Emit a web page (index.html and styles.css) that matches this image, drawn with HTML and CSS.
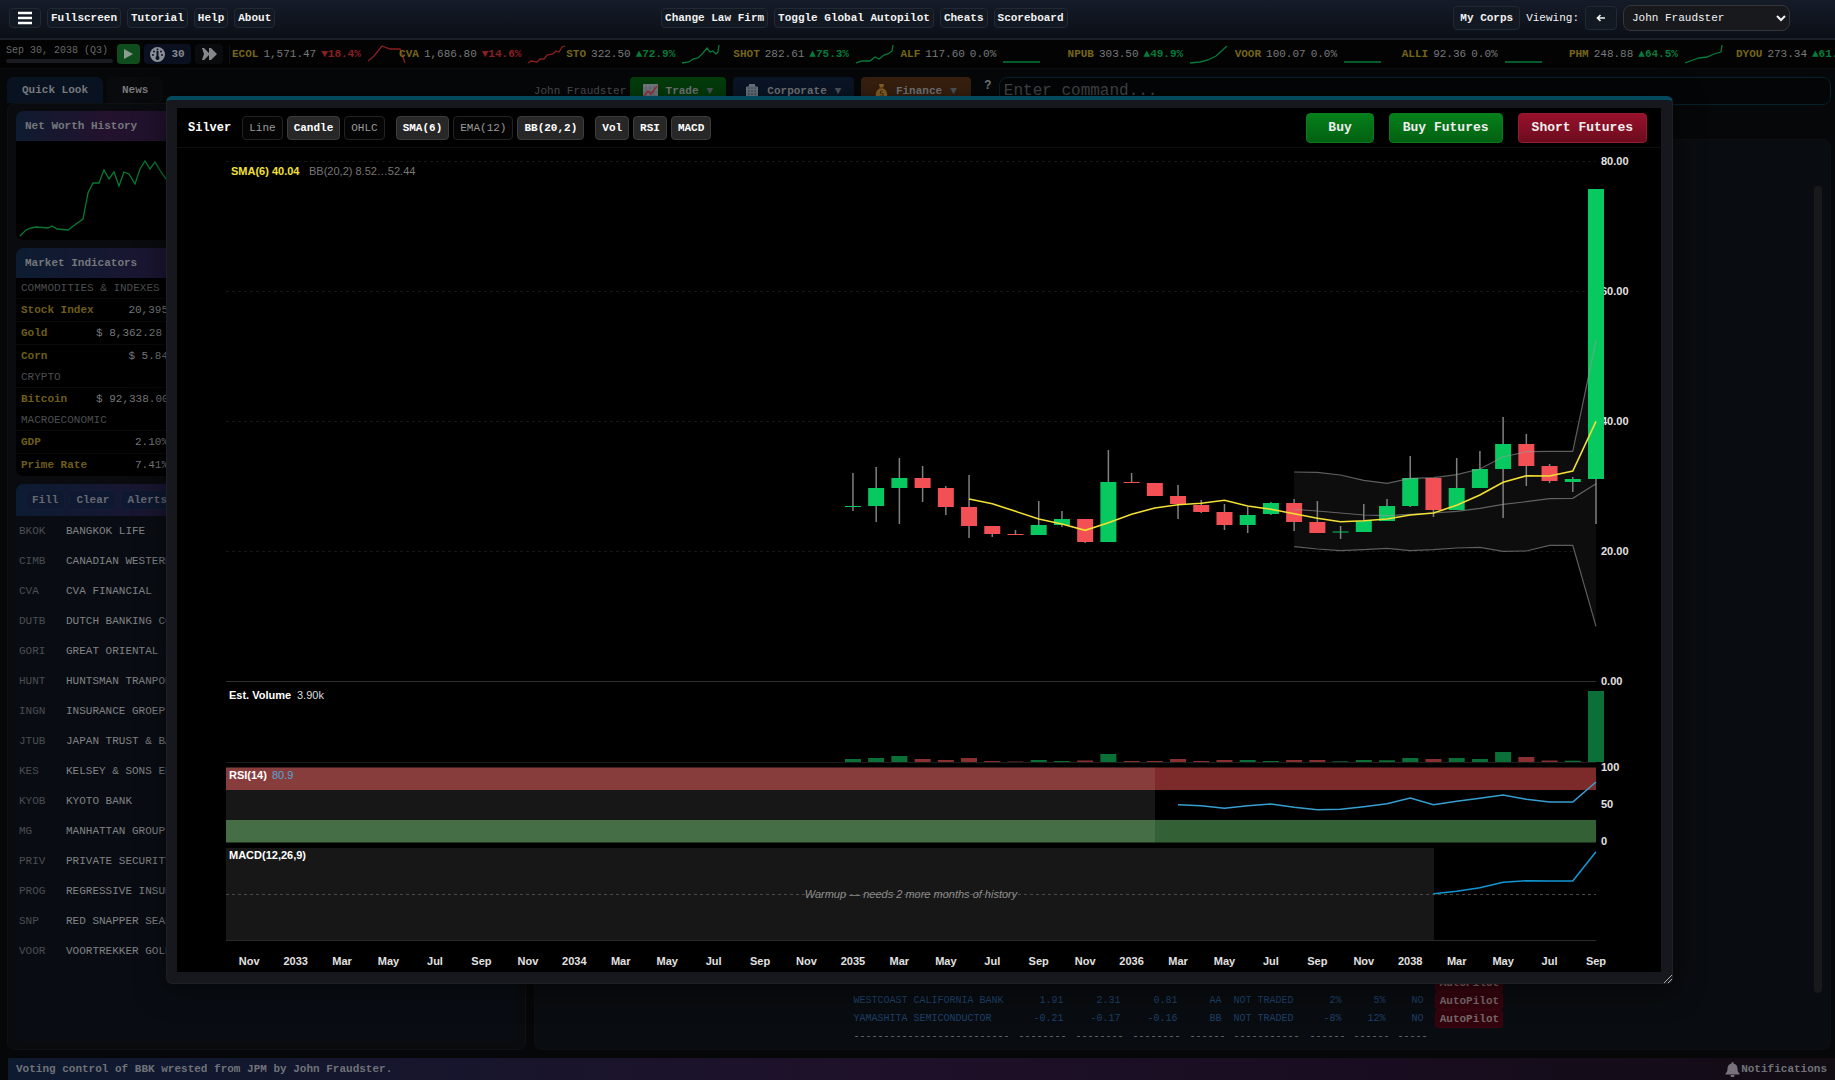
FILE: index.html
```html
<!DOCTYPE html>
<html lang="en">
<head>
  <meta charset="utf-8">
  <meta name="viewport" content="width=device-width, initial-scale=1.0">
  <title>Silver - Price Chart</title>
  <link rel="stylesheet" href="styles.css">
</head>
<body>
  <!-- Top menu -->
  <header class="topbar">
    <div class="group">
      <button class="btn menu-btn" aria-label="Menu">
        <svg width="14" height="14" viewBox="0 0 14 14"><path d="M0 2h14M0 7h14M0 12h14" stroke="#fff" stroke-width="2.4"/></svg>
      </button>
      <button class="btn">Fullscreen</button>
      <button class="btn">Tutorial</button>
      <button class="btn">Help</button>
      <button class="btn">About</button>
    </div>
    <div class="group">
      <button class="btn">Change Law Firm</button>
      <button class="btn">Toggle Global Autopilot</button>
      <button class="btn">Cheats</button>
      <button class="btn">Scoreboard</button>
    </div>
    <div class="group">
      <button class="btn tall">My Corps</button>
      <label for="viewing">Viewing:</label>
      <button class="btn tall back" aria-label="Back">
        <svg width="10" height="8" viewBox="0 0 10 8"><path d="M9 4H2M4.500 1L1.500 4l3 3" fill="none" stroke="#f2f2f2" stroke-width="1.700"/></svg>
      </button>
      <select id="viewing" class="viewing"><option>John Fraudster</option></select>
    </div>
  </header>

  <!-- Date, speed controls and stock ticker -->
  <div class="tickerbar">
    <div class="date">
      <span>Sep 30, 2038 (Q3)</span>
      <div class="progress"></div>
    </div>
    <button class="ctl play" aria-label="Play">
      <svg width="10" height="12" viewBox="0 0 10 12"><path d="M0 1l9 5-9 5z" fill="#8e9b90"/></svg>
    </button>
    <button class="ctl speed">
      <svg width="15" height="15" viewBox="0 0 15 15"><circle cx="7.500" cy="7.500" r="7.500" fill="#8a8e96"/><path d="M7.500 4v7" stroke="#0b1220" stroke-width="2"/><circle cx="7.500" cy="11" r="2" fill="#0b1220"/><g fill="#0b1220"><circle cx="3" cy="8" r="1"/><circle cx="4" cy="4.500" r="1"/><circle cx="11" cy="4.500" r="1"/><circle cx="12" cy="8" r="1"/><circle cx="7.500" cy="2.500" r="1"/></g></svg>
      30
    </button>
    <button class="ctl ff" aria-label="Fast forward">
      <svg width="16" height="14" viewBox="0 0 16 14"><path d="M1 1h2l5 5V1h2l6 6-6 6H8V8l-5 5H1l2-6z" fill="#85878a"/></svg>
    </button>
    <div class="ticker" id="ticker"></div>
  </div>

  <main class="main">
    <aside class="side">
      <nav class="tabs">
        <button class="tab active">Quick Look</button>
        <button class="tab">News</button>
      </nav>
      <div class="side-panel">
        <section class="card">
          <h2>Net Worth History</h2>
          <svg class="worth" height="99">
            <polyline points="4,95 10,89 15,87 20,86 32,87 36,85 41,88 52,89 60,83 67,78 72,52 77,42 83,42 88,29 93,38 98,31 103,45 108,31 113,33 119,43 124,28 129,20 134,28 139,21 145,31 150,38" fill="none" stroke="#067a33" stroke-width="1.300"/>
          </svg>
        </section>
        <section class="card">
          <h2>Market Indicators</h2>
          <table class="indicators">
            <colgroup><col class="i-name"><col class="i-value"><col></colgroup>
            <tr class="head"><th colspan="3">COMMODITIES &amp; INDEXES</th></tr>
            <tr><td>Stock Index</td><td>20,395</td><td></td></tr>
            <tr><td>Gold</td><td>$ 8,362.28&nbsp;</td><td></td></tr>
            <tr><td>Corn</td><td>$ 5.84</td><td></td></tr>
            <tr class="head"><th colspan="3">CRYPTO</th></tr>
            <tr><td>Bitcoin</td><td>$ 92,338.00</td><td></td></tr>
            <tr class="head"><th colspan="3">MACROECONOMIC</th></tr>
            <tr><td>GDP</td><td>2.10%</td><td></td></tr>
            <tr><td>Prime Rate</td><td>7.41%</td><td></td></tr>
          </table>
        </section>
        <section class="card watch">
          <div class="watch-head">
            <button>Fill</button>
            <button>Clear</button>
            <button>Alerts</button>
          </div>
          <ul>
            <li><span>BKOK</span>BANGKOK LIFE</li>
            <li><span>CIMB</span>CANADIAN WESTERN</li>
            <li><span>CVA</span>CVA FINANCIAL</li>
            <li><span>DUTB</span>DUTCH BANKING CO</li>
            <li><span>GORI</span>GREAT ORIENTAL L</li>
            <li><span>HUNT</span>HUNTSMAN TRANPOR</li>
            <li><span>INGN</span>INSURANCE GROEP,</li>
            <li><span>JTUB</span>JAPAN TRUST &amp; BA</li>
            <li><span>KES</span>KELSEY &amp; SONS EN</li>
            <li><span>KYOB</span>KYOTO BANK</li>
            <li><span>MG</span>MANHATTAN GROUP</li>
            <li><span>PRIV</span>PRIVATE SECURITY</li>
            <li><span>PROG</span>REGRESSIVE INSUR</li>
            <li><span>SNP</span>RED SNAPPER SEAF</li>
            <li><span>VOOR</span>VOORTREKKER GOLD</li>
          </ul>
        </section>
      </div>
    </aside>

    <section class="work">
      <div class="command">
        <span class="player">John Fraudster</span>
        <button class="cmd trade">
          <svg width="15" height="15" viewBox="0 0 15 15"><rect width="15" height="15" rx="1" fill="#7c8088"/><path d="M3 0v15M7 0v15M11 0v15M0 4h15M0 8h15M0 12h15" stroke="#62676f" stroke-width=".6"/><path d="M1 12l4-5 3 3 6-8" fill="none" stroke="#a0303a" stroke-width="1.500"/></svg>
          Trade <i>▼</i>
        </button>
        <button class="cmd corporate">
          <svg width="14" height="15" viewBox="0 0 14 15"><path d="M1 3l3-1V0h6v2l3 1v12H1z" fill="#6d7681"/><path d="M4 3v10M7 3v10M10 3v10" stroke="#37465a" stroke-dasharray="2 1"/></svg>
          Corporate <i>▼</i>
        </button>
        <button class="cmd finance">
          <svg width="13" height="15" viewBox="0 0 13 15"><path d="M4 0h5L8 4c3 2 5 5 4 8-1 3-10 3-11 0-1-3 1-6 4-8z" fill="#8a6428"/><path d="M4 4h5M8 7H5.500v2.500H8V12H5" fill="none" stroke="#4a3010"/></svg>
          Finance <i>▼</i>
        </button>
        <span class="help">?</span>
        <input class="prompt" type="text" placeholder="Enter command..." aria-label="Command">
      </div>
      <div class="board">
        <div class="scrollbar"></div>
        <table class="corps">
          <colgroup>
            <col class="c-name"><col class="c-num"><col class="c-num"><col class="c-num"><col class="c-rate"><col class="c-trade"><col class="c-pct"><col class="c-pct"><col class="c-no"><col class="c-pilot">
          </colgroup>
          <tr><td></td><td></td><td></td><td></td><td></td><td></td><td></td><td></td><td></td><td><button>AutoPilot</button></td></tr>
          <tr><td>WESTCOAST CALIFORNIA BANK</td><td>1.91</td><td>2.31</td><td>0.81</td><td>AA</td><td>NOT TRADED</td><td>2%</td><td>5%</td><td>NO</td><td><button>AutoPilot</button></td></tr>
          <tr><td>YAMASHITA SEMICONDUCTOR</td><td>-0.21</td><td>-0.17</td><td>-0.16</td><td>BB</td><td>NOT TRADED</td><td>-8%</td><td>12%</td><td>NO</td><td><button>AutoPilot</button></td></tr>
          <tr class="rule"><td>--------------------------</td><td>--------</td><td>--------</td><td>--------</td><td>------</td><td>-----------</td><td>------</td><td>------</td><td>-----</td><td></td></tr>
        </table>
      </div>
    </section>
  </main>

  <footer class="status">
    <span>Voting control of BBK wrested from JPM by John Fraudster.</span>
    <span class="notes">
      <svg width="15" height="15" viewBox="0 0 15 15"><path d="M7.500 0c1 0 1 1 1 1.500 3 .5 4 3 4 5 0 3 1 4 2 5v1H.5v-1c1-1 2-2 2-5 0-2 1-4.500 4-5 0-.5 0-1.500 1-1.500zM5.500 13h4c0 3-4 3-4 0z" fill="#77727c"/></svg>
      Notifications
    </span>
  </footer>

  <!-- Chart window -->
  <div class="overlay">
    <div class="modal">
      <div class="modal-inner">
        <div class="toolbar">
          <h1>Silver</h1>
          <div class="toggles">
            <button>Line</button>
            <button class="on">Candle</button>
            <button>OHLC</button>
          </div>
          <div class="toggles">
            <button class="on">SMA(6)</button>
            <button>EMA(12)</button>
            <button class="on">BB(20,2)</button>
          </div>
          <div class="toggles">
            <button class="on">Vol</button>
            <button class="on">RSI</button>
            <button class="on">MACD</button>
          </div>
          <div class="actions">
            <button class="buy wide">Buy</button>
            <button class="buy">Buy Futures</button>
            <button class="short">Short Futures</button>
          </div>
        </div>
        <svg class="chart" id="chart" viewBox="177 148 1484 824" preserveAspectRatio="xMidYMid meet"></svg>
      </div>
      <svg class="grip" width="8" height="8" viewBox="0 0 8 8"><path d="M0 8l8-8M4 8l4-4" stroke="#aaa"/></svg>
    </div>
  </div>

  <script src="script.js"></script>
</body>
</html>
```
FILE: styles.css
```css
* {
  box-sizing: border-box;
}

body {
  margin: 0;
  height: 100vh;
  display: flex;
  flex-direction: column;
  overflow: hidden;
  background: #060708;
  color: #77797c;
  font: 11px/14px "Liberation Mono", "DejaVu Sans Mono", monospace;
}

button,
select,
input {
  font: inherit;
  color: inherit;
  margin: 0;
}

button {
  font-weight: bold;
  white-space: nowrap;
}

h1,
h2,
ul {
  margin: 0;
  padding: 0;
}

/* Top menu */
.topbar {
  flex: 0 0 40px;
  display: flex;
  align-items: center;
  justify-content: space-between;
  padding: 0 45px 2px 9px;
  background: linear-gradient(#151b28, #0b0f17);
  border-bottom: 2px solid #1c2026;
  color: #f2f2f2;
}

.group {
  display: flex;
  align-items: center;
  gap: 6px;
}

.btn {
  display: flex;
  align-items: center;
  justify-content: center;
  height: 20px;
  padding: 0 3px;
  background: #131922;
  border: 1px solid #222934;
  border-radius: 4px;
}

.menu-btn {
  width: 32px;
}

.tall {
  height: 24px;
  padding: 0 6px;
}

.back {
  width: 32px;
}

.viewing {
  width: 167px;
  height: 26px;
  padding: 0 4px;
  background: #17191d;
  border: 1px solid #33363b;
  border-radius: 8px;
}

/* Ticker */
.tickerbar {
  flex: 0 0 29px;
  display: flex;
  align-items: center;
  gap: 4px;
  padding-left: 6px;
  background: #030303;
  border-bottom: 1px solid #0c0d0e;
  overflow: hidden;
}

.date {
  width: 107px;
  margin-bottom: 2px;
  white-space: nowrap;
  color: #66686a;
  font-size: 10px;
}

.progress {
  height: 4px;
  margin-top: 1px;
  border-radius: 2px;
  background: #1a1c22;
}

.ctl {
  display: flex;
  align-items: center;
  justify-content: center;
  gap: 6px;
  height: 20px;
  padding: 0;
  border: 0;
  border-radius: 4px;
  color: #85888d;
}

.play {
  width: 23px;
  background: #104d1e;
}

.speed {
  width: 47px;
  background: #0a1020;
}

.ff {
  width: 28px;
  background: #0a0b0c;
}

.ticker {
  flex: 1;
  display: flex;
  margin-left: 2px;
  padding-left: 2px;
  border-left: 1px solid #111214;
  overflow: hidden;
}

.quote {
  flex: 0 0 auto;
  display: flex;
  align-items: center;
  gap: 5px;
  width: calc(100% / 9 - 11px);
  min-width: 167px;
  white-space: nowrap;
}

.quote svg {
  flex: none;
  margin-left: 2px;
}

.quote b {
  color: #75651a;
}

.quote .up {
  color: #067a3a;
  font-weight: bold;
}

.quote .down {
  color: #8a1f22;
  font-weight: bold;
}

/* Page columns */
.main {
  flex: 1;
  min-height: 0;
  display: grid;
  grid-template-columns: 2fr 5fr;
  gap: 8px;
  padding: 8px 4px 8px 7px;
}

.side,
.work {
  display: flex;
  flex-direction: column;
  min-width: 0;
  min-height: 0;
}

.tabs {
  display: flex;
  gap: 4px;
}

.tab {
  height: 26px;
  padding: 0 15px;
  border: 0;
  border-radius: 6px 6px 0 0;
  background: #090a0c;
}

.tab.active {
  background: #091220;
}

.side-panel {
  flex: 1;
  display: flex;
  flex-direction: column;
  gap: 8px;
  padding: 7px 8px;
  border: 1px solid #0f1114;
  border-radius: 8px;
  background: #090b0e;
}

.card {
  border-radius: 7px;
  overflow: hidden;
  background: #000;
}

.card h2 {
  height: 30px;
  padding-left: 9px;
  background: linear-gradient(90deg, #0e1b30, #24122f 90px, #0e1424 400px);
  font-size: 11px;
  line-height: 30px;
  color: #74777c;
}

.card:nth-child(2) h2 {
  background: linear-gradient(90deg, #0d1c31, #1c1532 150px, #0e1424 400px);
}

.worth {
  display: block;
  width: 100%;
}

.indicators {
  width: 100%;
  table-layout: fixed;
  border-collapse: collapse;
}

.i-name { width: 80px; }
.i-value { width: 72px; }

.indicators td,
.indicators th {
  height: 23px;
  padding: 0;
  border-top: 1px solid #0a0a0b;
  color: #6e5d18;
  font-weight: bold;
  text-align: left;
}

.indicators .head th {
  height: 20px;
  padding-left: 5px;
  border: 0;
  color: #4c4e50;
  font-weight: normal;
}

.indicators td:first-child {
  padding-left: 5px;
  white-space: nowrap;
}

.indicators td:nth-child(2) {
  text-align: right;
  font-weight: normal;
  white-space: nowrap;
  color: #77797b;
}

.watch {
  flex: 1;
  background: #090d13;
}

.watch-head {
  display: flex;
  align-items: center;
  gap: 4px;
  height: 32px;
  padding-left: 9px;
  background: linear-gradient(90deg, #0c1c32, #1b1532 150px, #0e1424 400px);
}

.watch-head button {
  height: 20px;
  padding: 0 6px;
  border: 1px solid #161c30;
  border-radius: 4px;
  background: #0e1830;
  color: #666a70;
}

.watch ul {
  list-style: none;
}

.watch li {
  display: flex;
  height: 30px;
  padding-left: 3px;
  line-height: 30px;
  white-space: nowrap;
  color: #808284;
}

.watch li span {
  width: 47px;
  color: #4b4e51;
}

/* Command row */
.command {
  display: flex;
  align-items: center;
  height: 28px;
  gap: 7px;
}

.player {
  width: 89px;
  color: #4f5255;
  white-space: nowrap;
}

.cmd {
  display: flex;
  align-items: center;
  justify-content: center;
  gap: 8px;
  height: 28px;
  padding: 0;
  border: 0;
  border-radius: 4px;
}

.cmd i {
  font-style: normal;
  color: #4f5860;
}

.trade {
  width: 96px;
  background: #033d0b;
}

.corporate {
  width: 121px;
  background: #0a1526;
}

.finance {
  width: 110px;
  background: #38200f;
}

.help {
  width: 20px;
  align-self: flex-start;
  line-height: 18px;
  text-align: center;
  font-weight: bold;
  font-size: 12px;
}

.prompt {
  flex: 1;
  min-width: 0;
  height: 28px;
  margin-left: -6px;
  padding: 0 4px;
  border: 1px solid #06202c;
  border-radius: 8px;
  background: #030506;
  font-size: 16px;
}

.prompt::placeholder {
  color: #44474a;
}

.board {
  flex: 1;
  position: relative;
  display: flex;
  align-items: flex-end;
  justify-content: center;
  margin-top: 34px;
  padding: 0 8px 3px 0;
  border: 1px solid #0d0f12;
  border-radius: 8px;
  background: #090c10;
}

/* Thumb over the right edge of the board */
.scrollbar {
  position: absolute;
  top: 46px;
  right: 8px;
  bottom: 56px;
  width: 8px;
  border-radius: 4px;
  background: #17191b;
}

.corps {
  width: 650px;
  table-layout: fixed;
  border-collapse: collapse;
  font-size: 10px;
  color: #1d4068;
}

.c-name { width: 165px; }
.c-num { width: 57px; }
.c-rate { width: 44px; }
.c-trade { width: 76px; }
.c-pct { width: 44px; }
.c-no { width: 38px; }
.c-pilot { width: 68px; }

.corps td {
  height: 18px;
  padding: 0 12px 0 0;
  line-height: 16px;
  text-align: right;
  white-space: nowrap;
}

.corps td:first-child,
.corps td:nth-child(6),
.corps .rule td {
  padding: 0;
  text-align: left;
}

.corps td:last-child {
  padding: 0;
}

.corps .rule td {
  color: #6a6d70;
}

.corps button {
  display: block;
  width: 68px;
  height: 18px;
  padding: 0;
  border: 1px solid #3c0510;
  border-radius: 3px;
  background: #33040d;
  color: #76686b;
  font-size: 11px;
}

/* Status bar */
.status {
  flex: 0 0 22px;
  display: flex;
  align-items: center;
  justify-content: space-between;
  margin-left: 8px;
  padding: 0 8px;
  background: linear-gradient(90deg, #0e1a30, #1e112a 45%, #180d20 75%, #120c14);
  color: #6f7378;
  font-weight: bold;
}

.notes {
  display: flex;
  align-items: center;
  gap: 1px;
}

/* Chart window */
.overlay {
  position: fixed;
  inset: 0;
  display: flex;
  padding: 96px 162px;
  padding-left: 166px;
  pointer-events: none;
}

.modal {
  flex: 1;
  position: relative;
  display: flex;
  padding: 8px 11px 11px 10px;
  background: #16181d;
  border: 1px solid #1d2127;
  border-top: 4px solid #04495e;
  border-radius: 6px;
  box-shadow: 0 4px 30px rgba(0, 0, 0, 0.5);
  pointer-events: auto;
}

.modal-inner {
  flex: 1;
  min-width: 0;
  display: flex;
  flex-direction: column;
  background: #000;
}

.toolbar {
  flex: 0 0 40px;
  display: flex;
  align-items: center;
  gap: 11px;
  padding: 0 14px 0 11px;
  border-bottom: 1px solid #0e0e0f;
}

.toolbar h1 {
  font-size: 12px;
  color: #fff;
}

.toggles {
  display: flex;
  gap: 4px;
}

.toggles button {
  height: 24px;
  padding: 0 6px;
  border: 1px solid #222;
  border-radius: 4px;
  background: #050505;
  color: #999;
  font-weight: normal;
}

.toggles .on {
  background: #272727;
  border-color: #3c3c3c;
  color: #fff;
  font-weight: bold;
}

.actions {
  display: flex;
  gap: 15px;
  margin-left: auto;
}

.actions button {
  height: 30px;
  padding: 0 13px;
  border: 1px solid #0b7a1c;
  border-radius: 4px;
  color: #eee;
  font-size: 13px;
}

.actions .wide {
  padding: 0 21px;
}

.actions .buy {
  background: linear-gradient(#05801a, #036012);
}

.actions .short {
  border-color: #951c33;
  background: linear-gradient(#98102b, #6c0c1e);
}

.chart {
  flex: 1;
  min-height: 0;
  width: 100%;
  font: 11px "Liberation Sans", Arial, sans-serif;
}

.axis {
  fill: #e2e2e2;
  font-weight: bold;
}

.title {
  fill: #fff;
  font-weight: bold;
}

.warmup {
  fill: #8c8c8c;
  font-style: italic;
}

/* Resize handle */
.grip {
  position: absolute;
  right: 0;
  bottom: 0;
}
```
FILE: script.js
```js
// ---- Ticker ----
const quotes = [
  ['ECOL', '1,571.47', '▼18.4%', 'down', '0,16 6,11 14,1 22,4 32,4 37,18'],
  ['CVA', '1,686.80', '▼14.6%', 'down', '0,18 3,16 9,17 12,14 16,14 19,10 25,9 28,6 31,7 34,2 37,1'],
  ['STO', '322.50', '▲72.9%', 'up', '0,18 7,17 11,14 16,13 21,8 25,3 28,7 31,6 34,9 36,7 37,0'],
  ['SHOT', '282.61', '▲75.3%', 'up', '0,18 6,16 14,16 19,12 23,14 28,10 32,9 36,6 37,0'],
  ['ALF', '117.60', '0.0%', '', '0,17 37,17'],
  ['NPUB', '303.50', '▲49.9%', 'up', '0,18 10,17 18,15 26,11 37,1'],
  ['VOOR', '100.07', '0.0%', '', '0,17 37,17'],
  ['ALLI', '92.36', '0.0%', '', '0,17 37,17'],
  ['PHM', '248.88', '▲64.5%', 'up', '0,18 8,15 14,13 22,12 29,9 36,7 37,0'],
  ['DYOU', '273.34', '▲61.2%', 'up', '0,18 18,12 37,1']
];

document.getElementById('ticker').innerHTML = quotes.map(q => {
  const color = q[3] === 'down' ? '#8a1f22' : '#067a3a';
  return `<div class="quote"><b>${q[0]}</b><span>${q[1]}</span><span class="${q[3]}">${q[2]}</span>
    <svg width="38" height="19"><polyline points="${q[4]}" fill="none" stroke="${color}" stroke-width="1.3"/></svg></div>`;
}).join('');

// ---- Chart ----
const LEFT = 226;
const RIGHT = 1596;
const STEP = (RIGHT - LEFT) / 59;
const FIRST = 27; // slot of the first month with data
const BAR = 16;
const UP = '#08c860';
const DOWN = '#f25054';

const slotX = i => LEFT + i * STEP;
const dataX = i => slotX(i + FIRST);

// up?, body top, body bottom, wick top, wick bottom, volume height
const candles = [
  [1, 506, 507, 473, 511, 3], [1, 488, 506, 467, 522, 4], [1, 478, 488, 458, 524, 6],
  [0, 478, 488, 466, 502, 3], [0, 488, 507, 486, 515, 2], [0, 507, 526, 475, 538, 4],
  [0, 526, 534, 526, 537, 1], [0, 534, 535, 530, 535, 0.5], [1, 525, 535, 501, 535, 2],
  [1, 519, 525, 511, 527, 1], [0, 519, 542, 519, 543, 1.5], [1, 482, 542, 450, 542, 8],
  [0, 482, 483, 473, 483, 1], [0, 483, 496, 483, 496, 1], [0, 496, 504, 485, 519, 3],
  [0, 505, 512, 500, 513, 1], [0, 512, 525, 504, 530, 2], [1, 515, 525, 507, 533, 2],
  [1, 503, 514, 502, 515, 1], [0, 503, 522, 499, 531, 2], [0, 522, 533, 501, 533, 2],
  [1, 531.5, 532.5, 526, 539, 0.7], [1, 521, 532, 504, 532, 2], [1, 506, 521, 499, 521, 1.7],
  [1, 478, 506, 456, 507, 4], [0, 478, 510, 478, 517, 3], [1, 488, 510, 458, 510, 4],
  [1, 469, 488, 451, 488, 3], [1, 444, 469, 417, 518, 10], [0, 444, 466, 434, 486, 5],
  [0, 466, 481, 464, 483, 1.5], [1, 479, 482, 477, 492, 1.3], [1, 189, 479, 189, 524, 71]
];

const sma = [499, 503.7, 511.3, 519, 524, 530.3, 522.7, 514.3, 508, 504.7, 503.3, 500.3, 506, 509.3,
  513.7, 518.3, 521.7, 520.7, 519, 515, 513, 505.3, 495, 482.3, 475.7, 476, 471, 421.3];
const bbUpper = [472, 472.3, 475, 480.3, 483.3, 478.3, 477.7, 474.7, 469, 456.7, 451.7, 451.3, 451.3, 340.3];
const bbMid = [509.3, 511, 513, 515, 515.7, 514.3, 513, 511.3, 508.3, 504.3, 501.7, 498.7, 498.3, 483.7];
const bbLower = [546.7, 549, 550.7, 549.7, 548.3, 550.7, 549.7, 548, 547.3, 551.3, 551, 545.3, 545.3, 626.3];
const rsi = [804.7, 805.7, 808.3, 805.7, 804, 807.3, 809.7, 809.3, 806.7, 803.7, 798, 804.7, 801.3,
  798.3, 795, 799.3, 802, 802, 782];
const macd = [893.7, 891.3, 887.7, 882.3, 880.7, 881, 881, 851.7];

const pts = (list, start) => list.map((y, i) => `${dataX(i + start)},${y}`);
const rect = (x, y, w, h, fill) => `<rect x="${x}" y="${y}" width="${w}" height="${h}" fill="${fill}"/>`;
const line = (x1, y1, x2, y2, stroke, dash = '') =>
  `<line x1="${x1}" y1="${y1}" x2="${x2}" y2="${y2}" stroke="${stroke}" stroke-dasharray="${dash}"/>`;
const poly = (list, start, stroke, width) =>
  `<polyline points="${pts(list, start).join(' ')}" fill="none" stroke="${stroke}" stroke-width="${width}"/>`;
const text = (x, y, cls, str, extra = '') => `<text x="${x}" y="${y}" class="${cls}" ${extra}>${str}</text>`;

let out = '';

// price grid
[[161, '80.00'], [291, '60.00'], [421, '40.00'], [551, '20.00'], [681, '0.00']].forEach(([y, label]) => {
  out += line(LEFT, y + 0.5, RIGHT, y + 0.5, '#161616', '3 3');
  out += text(1601, y + 4, 'axis', label);
});
out += line(LEFT, 681.5, RIGHT, 681.5, '#303030');

// Bollinger fill
out += `<polygon points="${pts(bbUpper, 19).concat(pts(bbLower, 19).reverse()).join(' ')}" fill="#0d0d0d"/>`;

// candles and volume
out += line(LEFT, 762.5, RIGHT, 762.5, '#1c1c1c');
candles.forEach(([up, top, bottom, high, low, vol], i) => {
  const x = dataX(i);
  out += `<line x1="${x}" y1="${high}" x2="${x}" y2="${low}" stroke="#808080" stroke-width="1.5"/>`;
  out += rect(x - BAR / 2, top, BAR, bottom - top, up ? UP : DOWN);
  out += rect(x - BAR / 2, 762 - vol, BAR, vol, up ? '#0b7038' : '#8a3032');
});

const BAND = 'rgba(153,153,153,.6)';
out += poly(bbUpper, 19, BAND, 1.2) + poly(bbMid, 19, BAND, 1.2) + poly(bbLower, 19, BAND, 1.2);
out += poly(sma, 5, '#f2e035', 1.6);

// RSI pane
out += rect(LEFT, 767.5, RIGHT - LEFT, 22.5, '#7d2a2a');
out += rect(LEFT, 820, RIGHT - LEFT, 22.5, '#336035');
out += rect(LEFT, 767.5, 929, 75, 'rgba(255,255,255,.09)');
out += poly(rsi, 14, '#369fd0', 1.6);
out += text(1601, 771, 'axis', '100') + text(1601, 808, 'axis', '50') + text(1601, 845, 'axis', '0');

// MACD pane
out += rect(LEFT, 848, 1208, 93, '#171717');
out += line(LEFT, 940.5, RIGHT, 940.5, '#2b2b2b');
out += line(LEFT, 894.5, RIGHT, 894.5, '#4a4a4a', '3 3');
out += poly(macd, 25, '#1196d4', 1.6);
out += text(911, 898, 'warmup', 'Warmup — needs 2 more months of history', 'text-anchor="middle"');

// pane titles
out += text(231, 175, 'title', 'SMA(6) 40.04', 'style="fill:#f2e035"');
out += text(309, 175, '', 'BB(20,2) 8.52…52.44', 'fill="#777"');
out += text(229, 699, 'title', 'Est. Volume') + text(297, 699, '', '3.90k', 'fill="#ddd"');
out += text(229, 779, 'title', 'RSI(14)') + text(272, 779, '', '80.9', 'fill="#55a5d5"');
out += text(229, 859, 'title', 'MACD(12,26,9)');

// months
const months = ['Nov', '', 'Mar', 'May', 'Jul', 'Sep'];
const years = [2033, 2034, 2035, 2036, 2038];
for (let i = 0; i < 30; i++) {
  const label = months[i % 6] || years[Math.floor(i / 6)];
  out += text(slotX(i * 2 + 1), 965, 'axis', label, 'text-anchor="middle"');
}

document.getElementById('chart').innerHTML = out;
```
